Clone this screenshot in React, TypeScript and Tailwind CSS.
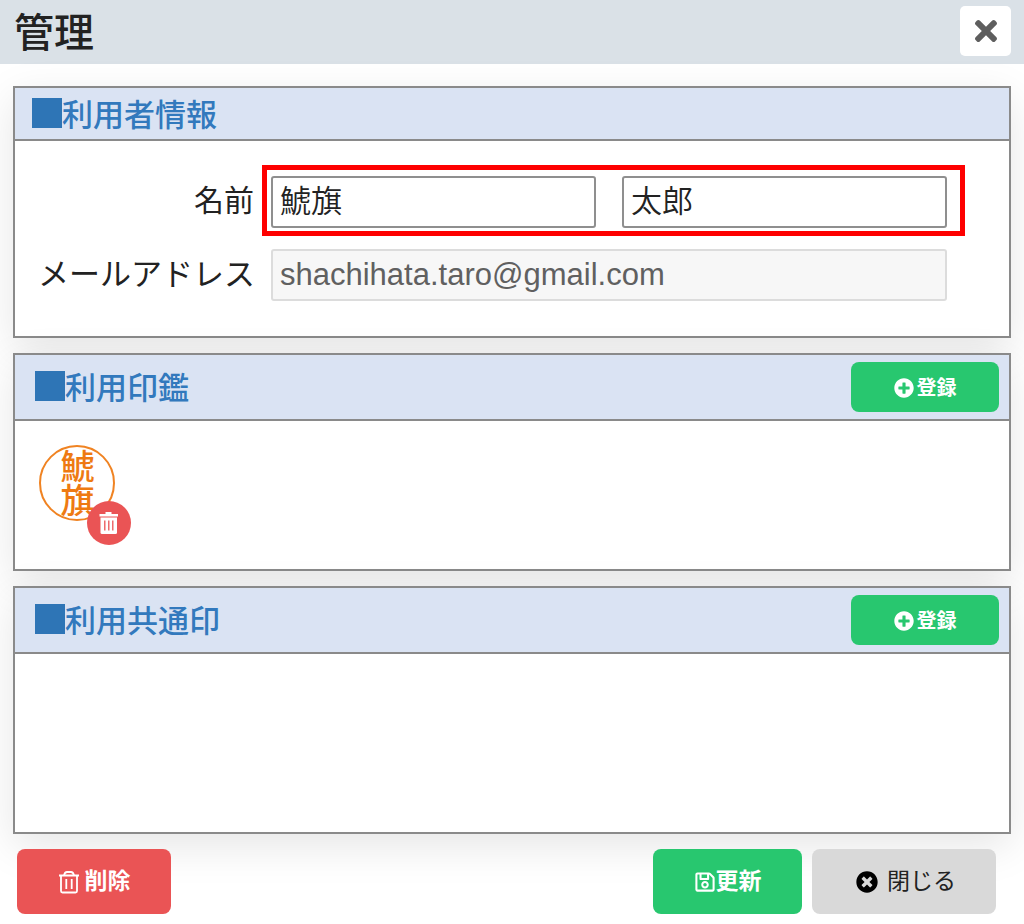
import React, { useState } from 'react';
import { FaPlusCircle, FaRegSave, FaTimes, FaTimesCircle } from 'react-icons/fa';
import { clsx } from 'clsx';

interface SectionProps {
  title: string;
  onRegister?: () => void;
  children?: React.ReactNode;
}

const TrashSolid = () => (
  <svg viewBox="0 0 22 24" className="h-6 w-[22px]" fill="none" aria-hidden="true">
    <path d="M7.5 1h6v2H20v2.5H1.5V3h6z" fill="currentColor" />
    <path d="M2.5 6.5h16.500V21.500a1.500 1.500 0 0 1-1.500 1.500H4a1.500 1.500 0 0 1-1.500-1.500z" fill="currentColor" />
    <path d="M6.800 9.500v10M10.800 9.500v10M14.800 9.500v10" stroke="#ea5455" strokeWidth="1.300" />
  </svg>
);

const TrashOutline = () => (
  <svg viewBox="0 0 22 24" className="h-6 w-[22px]" fill="none" stroke="currentColor" strokeWidth="1.800" aria-hidden="true">
    <path d="M1 5.500h20M3 5.500v15.500a1.500 1.500 0 0 0 1.500 1.500h13a1.500 1.500 0 0 0 1.500-1.500V5.500" />
    <path d="M6 5.500C6.500 3 7.500 2 9 2h4c1.500 0 2.500 1 3 3.500M8.300 9v10M13.700 9v10" />
  </svg>
);

const Section: React.FC<SectionProps> = ({ title, onRegister, children }) => (
  <section className="border-2 border-[#8a8a8a] bg-white shadow-[0_12px_40px_rgba(0,0,0,0.1)]">
    <div
      className={clsx(
        'flex items-center justify-between border-b-2 border-[#8a8a8a] bg-[#dae3f3] pr-[10px]',
        onRegister ? 'h-[66px] pl-5' : 'h-[53px] pl-[17px]'
      )}
    >
      <h2 className="flex items-start pt-1 text-[31px] leading-[40px] font-medium text-[#3279bd]">
        <span className="mt-0.5 size-[30px] bg-[#2e75b6]" />
        {title}
      </h2>
      {onRegister && (
        <button
          type="button"
          onClick={onRegister}
          className="flex h-[50px] w-[148px] items-center justify-center gap-[3px] rounded-lg bg-[#28c76f] pt-px text-[20px] font-bold text-white"
        >
          <FaPlusCircle className="size-5" />
          登録
        </button>
      )}
    </div>
    {children}
  </section>
);

export default function App() {
  const [lastName, setLastName] = useState('鯱旗');
  const [firstName, setFirstName] = useState('太郎');
  const [hasSeal, setHasSeal] = useState(true);

  const nameInput =
    'h-[52px] w-full min-w-0 rounded-[3px] border-2 border-[#8f8f8f] bg-white pr-2 pb-2 pl-[7px] text-[31px] font-[350] text-[#222]';

  return (
    <div className="bg-white font-['Liberation_Sans','Noto_Sans_CJK_JP',sans-serif] text-[#222]">
      {/* Title bar */}
      <header className="flex h-16 items-start justify-between bg-[#dae1e7] pt-[6px] pr-[13px] pl-[14px]">
        <h1 className="text-[40px] leading-[54px] font-medium">管理</h1>
        <button
          type="button"
          aria-label="閉じる"
          className="flex h-[50px] w-[51px] items-center justify-center rounded-[5px] bg-white text-[#5e5e5e]"
        >
          <FaTimes className="size-8" />
        </button>
      </header>

      <main className="flex flex-col gap-[15px] px-[13px] pt-[22px]">
        <Section title="利用者情報">
          <div className="pt-6 pr-[44px] pb-[35px]">
            <div className="flex items-center">
              <label htmlFor="last-name" className="mr-2 w-[239px] text-right text-[30px] leading-[40px]">
                名前
              </label>
              {/* Highlighted name fields */}
              <div className="grid flex-1 grid-cols-2 gap-[26px] border-[5px] border-[#fe0000] pt-[6px] pr-[13px] pb-[3px] pl-1">
                <input
                  id="last-name"
                  aria-label="姓"
                  value={lastName}
                  onChange={(e) => setLastName(e.target.value)}
                  className={nameInput}
                />
                <input
                  id="first-name"
                  aria-label="名"
                  value={firstName}
                  onChange={(e) => setFirstName(e.target.value)}
                  className={nameInput}
                />
              </div>
            </div>
            <div className="mt-[13px] flex items-center pr-[18px]">
              <label htmlFor="email" className="mr-4 w-[240px] text-right text-[31px] leading-[40px] whitespace-nowrap">
                メールアドレス
              </label>
              <input
                id="email"
                type="email"
                disabled
                value="shachihata.taro@gmail.com"
                className="h-[52px] min-w-0 flex-1 rounded-[3px] border-2 border-[#dcdcdc] bg-[#f7f7f7] px-[7px] text-[31px] text-[#606060]"
              />
            </div>
          </div>
        </Section>

        <Section title="利用印鑑" onRegister={() => setHasSeal(true)}>
          <div className="h-[148px] pt-6 pl-6">
            {hasSeal && (
              <div className="relative w-[76px]">
                <div className="flex size-[76px] items-center justify-center rounded-full border-2 border-[#f08322] pr-1 text-[34px] leading-[44px] font-medium text-[#ee7a12] [writing-mode:vertical-rl]">
                  鯱旗
                </div>
                <button
                  type="button"
                  aria-label="印鑑を削除"
                  onClick={() => setHasSeal(false)}
                  className="absolute -right-4 -bottom-6 flex size-11 items-center justify-center rounded-full bg-[#ea5455] text-white"
                >
                  <TrashSolid />
                </button>
              </div>
            )}
          </div>
        </Section>

        <Section title="利用共通印" onRegister={() => {}}>
          <div className="h-[178px]" />
        </Section>
      </main>

      <footer className="relative flex h-[91px] items-start gap-[10px] pt-[15px] pr-7 pl-[17px] text-[23px]">
        <button
          type="button"
          className="mr-auto flex h-[65px] w-[154px] items-center justify-center gap-[5px] rounded-lg bg-[#ea5455] font-bold text-white"
        >
          <TrashOutline />
          削除
        </button>
        <button
          type="button"
          className="flex h-[65px] w-[149px] items-center justify-center rounded-lg bg-[#28c76f] font-bold text-white"
        >
          <FaRegSave className="size-[22px]" />
          更新
        </button>
        <button
          type="button"
          className="flex h-[65px] w-[184px] items-center justify-center gap-[9px] rounded-lg bg-[#d9d9d9] pl-1"
        >
          <FaTimesCircle className="size-[22px] text-black" />
          閉じる
        </button>
      </footer>
    </div>
  );
}
